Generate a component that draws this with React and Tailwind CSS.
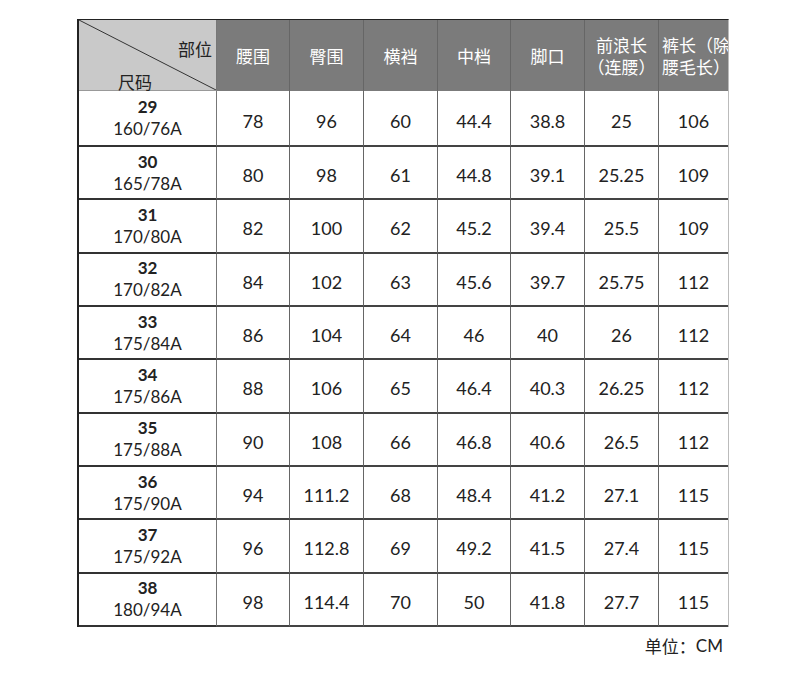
const heads = [
  ["腰围"],
  ["臀围"],
  ["横裆"],
  ["中档"],
  ["脚口"],
  ["前浪长", "（连腰）"],
  ["裤长（除", "腰毛长）"],
];

const rows = [
  ["29", "160/76A", "78", "96", "60", "44.4", "38.8", "25", "106"],
  ["30", "165/78A", "80", "98", "61", "44.8", "39.1", "25.25", "109"],
  ["31", "170/80A", "82", "100", "62", "45.2", "39.4", "25.5", "109"],
  ["32", "170/82A", "84", "102", "63", "45.6", "39.7", "25.75", "112"],
  ["33", "175/84A", "86", "104", "64", "46", "40", "26", "112"],
  ["34", "175/86A", "88", "106", "65", "46.4", "40.3", "26.25", "112"],
  ["35", "175/88A", "90", "108", "66", "46.8", "40.6", "26.5", "112"],
  ["36", "175/90A", "94", "111.2", "68", "48.4", "41.2", "27.1", "115"],
  ["37", "175/92A", "96", "112.8", "69", "49.2", "41.5", "27.4", "115"],
  ["38", "180/94A", "98", "114.4", "70", "50", "41.8", "27.7", "115"],
];

const cjk = "font-['Noto_Sans_CJK_SC',sans-serif]";
const num = "font-['Lato','Noto_Sans_CJK_SC',sans-serif]";

export default function App() {
  return (
    <div className="w-[800px] h-[682px] bg-white pt-[19px] pl-[77px]">
      <div className="grid w-[652px] grid-cols-[138px_73px_74px_74px_73px_74px_74px_1fr] grid-rows-[71px_56px_repeat(9,53.33px)] border-l-2 border-t border-[#222] border-r border-r-[#bbb]">
        {/* header corner */}
        <div className={"relative bg-[#c9c9c9] border-r border-[#777] border-b border-b-[#999] " + cjk}>
          <svg className="absolute inset-0 w-full h-full" viewBox="0 0 137 70" preserveAspectRatio="none">
            <line x1="0" y1="0" x2="137" y2="70" stroke="#333" strokeWidth="1" />
          </svg>
          <span className="absolute right-[4px] top-[16px] text-[17px] text-[#222]">部位</span>
          <span className="absolute left-[39px] bottom-[-4px] text-[17px] text-[#222]">尺码</span>
        </div>
        {heads.map((h, i) => (
          <div
            key={i}
            className={
              "bg-[#7b7b7b] border-r border-[#666] flex flex-col justify-center text-white text-[17px] leading-[22px] overflow-hidden whitespace-nowrap " +
              cjk +
              (i === 6 ? " items-start pl-[3px] border-r-0" : " items-center")
            }
          >
            {h.map((t) => (
              <span key={t}>{t}</span>
            ))}
          </div>
        ))}

        {rows.map((r, ri) => [
          <div
            key={ri + "-s"}
            className={"border-r border-[#777] border-b-2 border-b-[#333] flex flex-col items-center justify-center text-[#222] leading-[22px] " + num}
          >
            <span className="text-[17px] font-bold">{r[0]}</span>
            <span className="text-[17px]">{r[1]}</span>
          </div>,
          ...r.slice(2).map((v, ci) => (
            <div
              key={ri + "-" + ci}
              className={
                "border-b-2 border-b-[#444] flex items-center justify-center pt-[6px] text-[18px] text-[#222] " +
                num +
                (ci === 6 ? "" : " border-r border-[#666]")
              }
            >
              {v}
            </div>
          )),
        ])}
      </div>
      <div className={"w-[652px] flex justify-end pr-[6px] pt-[6px] text-[17px] text-[#222] " + cjk}>
        单位：<span className={num}>CM</span>
      </div>
    </div>
  );
}
